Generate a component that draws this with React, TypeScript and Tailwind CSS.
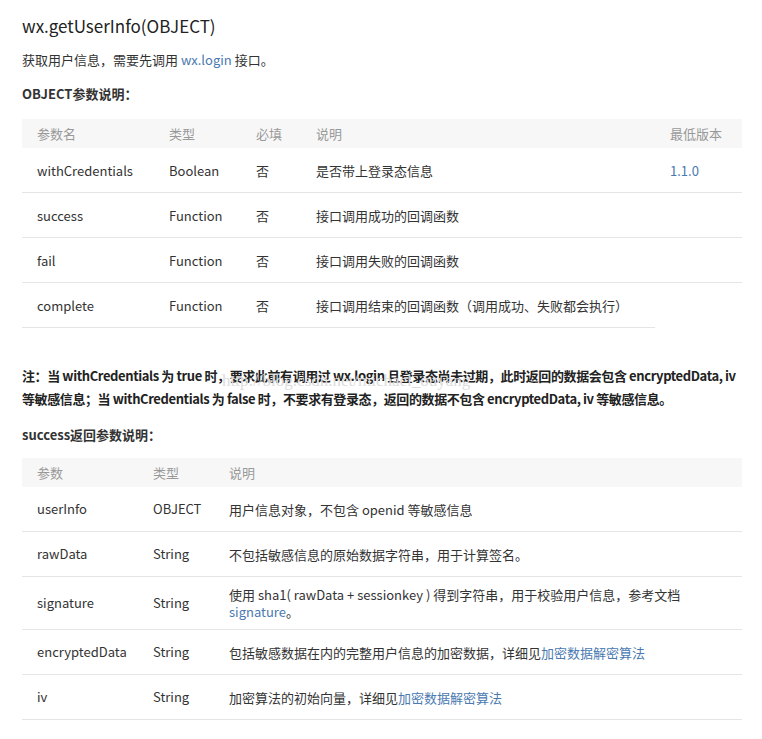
const F = { fontFamily: '"Microsoft YaHei", "Noto Sans CJK SC", sans-serif' };

const T1 = [
  ["withCredentials", "Boolean", "否", "是否带上登录态信息", "1.1.0"],
  ["success", "Function", "否", "接口调用成功的回调函数", ""],
  ["fail", "Function", "否", "接口调用失败的回调函数", ""],
  ["complete", "Function", "否", "接口调用结束的回调函数（调用成功、失败都会执行）", ""],
];

const link = "text-[#4a7ab0]";

export default function App() {
  return (
    <div className="relative w-[762px] h-[739px] bg-white text-[#333] text-[13px] pl-[22px] pr-[20px] pt-[14px]" style={F}>
      <h1 className="text-[17px] leading-[24px] text-[#222]">wx.getUserInfo(OBJECT)</h1>
      <p className="mt-[13px] leading-[18px]">获取用户信息，需要先调用 <span className={link}>wx.login</span> 接口。</p>
      <p className="mt-[16px] leading-[18px] font-bold">OBJECT参数说明：</p>

      <div className="mt-[16px]">
        <div className="flex h-[29px] items-center bg-[#f7f7f7] text-[#999] pl-[15px]">
          <span className="w-[132px]">参数名</span>
          <span className="w-[87px]">类型</span>
          <span className="w-[60px]">必填</span>
          <span className="w-[354px]">说明</span>
          <span>最低版本</span>
        </div>
        {T1.map((r, i) => (
          <div key={i} className="relative flex h-[45px] items-center pl-[15px]">
            <span className="w-[132px] shrink-0">{r[0]}</span>
            <span className="w-[87px] shrink-0">{r[1]}</span>
            <span className="w-[60px] shrink-0">{r[2]}</span>
            <span className="w-[354px] shrink-0 whitespace-nowrap">{r[3]}</span>
            <span className={link}>{r[4]}</span>
            <div className={`absolute left-0 bottom-0 h-px bg-[#e5e5e5] ${i === 3 ? "w-[633px]" : "w-full"}`} />
          </div>
        ))}
      </div>

      <div className="mt-[36px] leading-[23px] text-[13px] text-[#222] tracking-[-0.4px]" style={{ fontWeight: 600 }}>
        <p>注：当 withCredentials 为 true 时，要求此前有调用过 wx.login 且登录态尚未过期，此时返回的数据会包含 encryptedData, iv 等敏感信息；当 withCredentials 为 false 时，不要求有登录态，返回的数据不包含 encryptedData, iv 等敏感信息。</p>
      </div>
      <p className="mt-[16px] leading-[18px] font-bold">success返回参数说明：</p>

      <div className="mt-[14px]">
        <div className="flex h-[29px] items-center bg-[#f7f7f7] text-[#999] pl-[15px]">
          <span className="w-[116px]">参数</span>
          <span className="w-[76px]">类型</span>
          <span>说明</span>
        </div>
        {[
          ["userInfo", "OBJECT", <>用户信息对象，不包含 openid 等敏感信息</>, 45],
          ["rawData", "String", <>不包括敏感信息的原始数据字符串，用于计算签名。</>, 45],
          ["signature", "String", <>使用 sha1( rawData + sessionkey ) 得到字符串，用于校验用户信息，参考文档 <br /><span className={link}>signature</span>。</>, 53],
          ["encryptedData", "String", <>包括敏感数据在内的完整用户信息的加密数据，详细见<span className={link}>加密数据解密算法</span></>, 45],
          ["iv", "String", <>加密算法的初始向量，详细见<span className={link}>加密数据解密算法</span></>, 45],
        ].map((r: any, i) => (
          <div key={i} className={`flex items-center pl-[15px] border-b border-[#e5e5e5] ${r[3] === 53 ? "h-[53px]" : "h-[45px]"}`}>
            <span className="w-[116px] shrink-0">{r[0]}</span>
            <span className="w-[76px] shrink-0">{r[1]}</span>
            <span className="leading-[17px]">{r[2]}</span>
          </div>
        ))}
      </div>

      <div className="absolute left-[222px] top-[368px] text-[17px] text-[#ddd] pointer-events-none" style={{ fontFamily: '"Liberation Serif", serif' }}>
        http://blog.csdn.net/michael_ouyang
      </div>
    </div>
  );
}
